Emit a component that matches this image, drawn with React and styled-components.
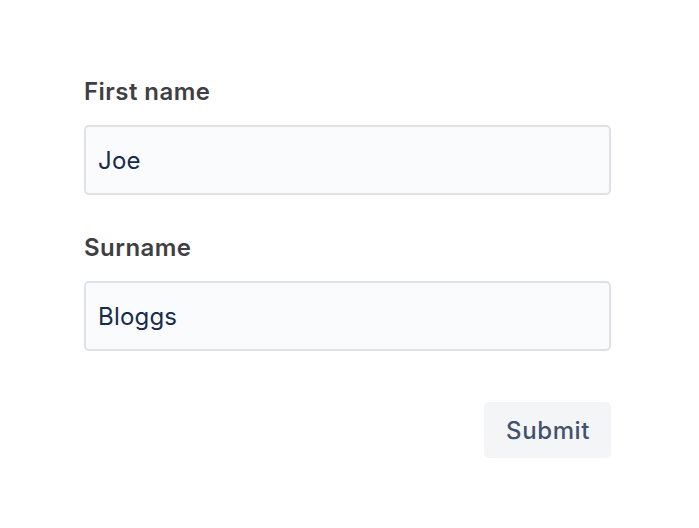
import React from 'react'
import styled, { createGlobalStyle } from 'styled-components'

const GlobalStyle = createGlobalStyle`
  body {
    margin: 0;
    background: #ffffff;
    font-family: Inter, "Noto Sans", sans-serif;
  }
`

const Wrapper = styled.form`
  width: 527px;
  padding: 77px 0 0 84px;
  display: flex;
  flex-direction: column;
`

const Field = styled.div`
  display: flex;
  flex-direction: column;
  gap: 19px;
  margin-bottom: ${(p) => p.$last ? '51px' : '38px'};
`

const Label = styled.label`
  font-size: 24px;
  line-height: 29px;
  font-weight: 600;
  letter-spacing: 0.45px;
  color: #403f43;
`

const Input = styled.input`
  box-sizing: border-box;
  width: 100%;
  height: 70px;
  padding: 0 12px;
  border: 2px solid #dfe1e6;
  border-radius: 5px;
  background: #fafbfc;
  font-family: Inter, "Noto Sans", sans-serif;
  font-size: 24px;
  letter-spacing: 0.2px;
  color: #172b4d;
  outline: none;
`

const Actions = styled.div`
  display: flex;
  justify-content: flex-end;
`

const Button = styled.button`
  height: 56px;
  padding: 0 21px 0 22px;
  border: none;
  border-radius: 5px;
  background: #f4f5f7;
  color: #42526e;
  font-family: Inter, "Noto Sans", sans-serif;
  font-size: 24px;
  font-weight: 500;
  letter-spacing: 0.6px;
  cursor: pointer;
`

const App = () => {
  return (
    <>
      <GlobalStyle />
      <Wrapper onSubmit={(e) => e.preventDefault()}>
        <Field>
          <Label htmlFor="first">First name</Label>
          <Input id="first" defaultValue="Joe" />
        </Field>
        <Field $last>
          <Label htmlFor="surname">Surname</Label>
          <Input id="surname" defaultValue="Bloggs" />
        </Field>
        <Actions>
          <Button type="submit">Submit</Button>
        </Actions>
      </Wrapper>
    </>
  )
}

export default App
